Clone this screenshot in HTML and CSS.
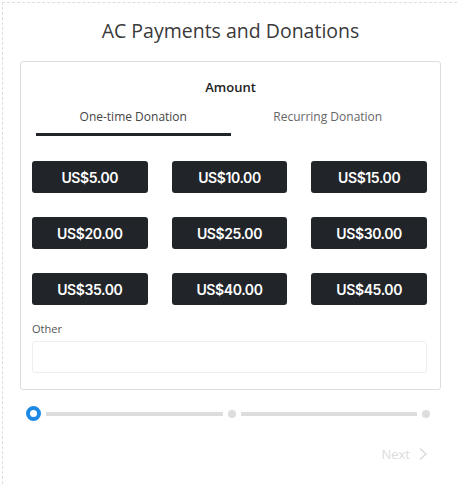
FILE: index.html
```html
<!DOCTYPE html>
<html lang="en">

<head>
  <meta charset="UTF-8">
  <meta name="viewport" content="width=device-width, initial-scale=1.0">
  <title>AC Payments and Donations</title>
  <link rel="stylesheet" href="styles.css">
</head>

<body>
  <div class="frame">
    <div class="wrap">
      <h1 class="title">AC Payments and Donations</h1>

      <div class="card">
        <h5 class="label">Amount</h5>
        <ul class="tabs">
          <li class="tab active">One-time Donation</li>
          <li class="tab">Recurring Donation</li>
        </ul>

        <div class="amounts">
          <button class="amt">US$5.00</button>
          <button class="amt">US$10.00</button>
          <button class="amt">US$15.00</button>
          <button class="amt">US$20.00</button>
          <button class="amt">US$25.00</button>
          <button class="amt">US$30.00</button>
          <button class="amt">US$35.00</button>
          <button class="amt">US$40.00</button>
          <button class="amt">US$45.00</button>
        </div>

        <div class="other">
          <label class="other-label">Other</label>
          <input class="other-input" type="text">
        </div>
      </div>

      <div class="steps">
        <span class="step current"></span>
        <span class="bar"></span>
        <span class="step"></span>
        <span class="bar"></span>
        <span class="step"></span>
      </div>

      <div class="nav">
        <span class="next">Next
          <svg width="10" height="14" viewBox="0 0 10 14"><polyline points="2,1.5 8,7 2,12.5" fill="none" stroke="#dcdcdc" stroke-width="1.6"/></svg>
        </span>
      </div>
    </div>
  </div>
</body>

</html>
```

FILE: styles.css
```css
* {
  margin: 0;
  padding: 0;
  box-sizing: border-box;
}

html,
body {
  overflow: hidden;
  background: #fff;
}

body {
  font-family: "Open Sans", "Liberation Sans", sans-serif;
  color: #333;
}

.frame {
  height: 482px;
  margin: 2px 0 0 2px;
  border-top: 1px dashed #ddd;
  border-left: 1px dashed #ddd;
}

.wrap {
  width: 421px;
  margin-left: 17px;
  padding-top: 14px;
}

.title {
  font-size: 19.5px;
  font-weight: 400;
  line-height: 28px;
  text-align: center;
  color: #3a3a3a;
  margin-bottom: 16px;
}

.card {
  border: 1px solid #ddd;
  border-radius: 3px;
  padding: 15px 0 16px;
}

.label {
  font-size: 13px;
  font-weight: 600;
  line-height: 20px;
  text-align: center;
  color: #222;
}

.tabs {
  display: flex;
  list-style: none;
  margin: 10px 15px 0;
}

.tab {
  flex: 1;
  font-size: 12px;
  line-height: 20px;
  text-align: center;
  color: #666;
  padding-bottom: 6px;
  border-bottom: 3px solid transparent;
}

.tab.active {
  color: #444;
  border-bottom-color: #212529;
}

.amounts {
  display: grid;
  grid-template-columns: repeat(3, 1fr);
  gap: 24px;
  margin: 25px 13px 0 11px;
}

.amt {
  height: 32px;
  border: none;
  border-radius: 3px;
  background: #212529;
  color: #fff;
  font-family: Inter, "Liberation Sans", sans-serif;
  font-size: 14px;
  font-weight: 600;
  letter-spacing: -0.4px;
}

.other {
  margin: 17px 13px 0 11px;
}

.other-label {
  display: block;
  font-size: 11px;
  line-height: 14px;
  color: #555;
  margin-bottom: 5px;
}

.other-input {
  display: block;
  width: 100%;
  height: 32px;
  border: 1px solid #eee;
  border-radius: 3px;
  outline: none;
}

.steps {
  display: flex;
  align-items: center;
  margin: 16px 11px 0 6px;
}

.step {
  width: 8px;
  height: 8px;
  border-radius: 50%;
  background: #ddd;
}

.step.current {
  width: 15px;
  height: 15px;
  border: 4px solid #1e88e5;
  background: #fff;
}

.bar {
  flex: 1;
  height: 4px;
  margin: 0 5px;
  background: #ddd;
}

.nav {
  display: flex;
  justify-content: flex-end;
  margin: 24px 13px 0 0;
}

.next {
  display: flex;
  align-items: center;
  gap: 8px;
  font-size: 13px;
  line-height: 18px;
  color: #dcdcdc;
}
```
